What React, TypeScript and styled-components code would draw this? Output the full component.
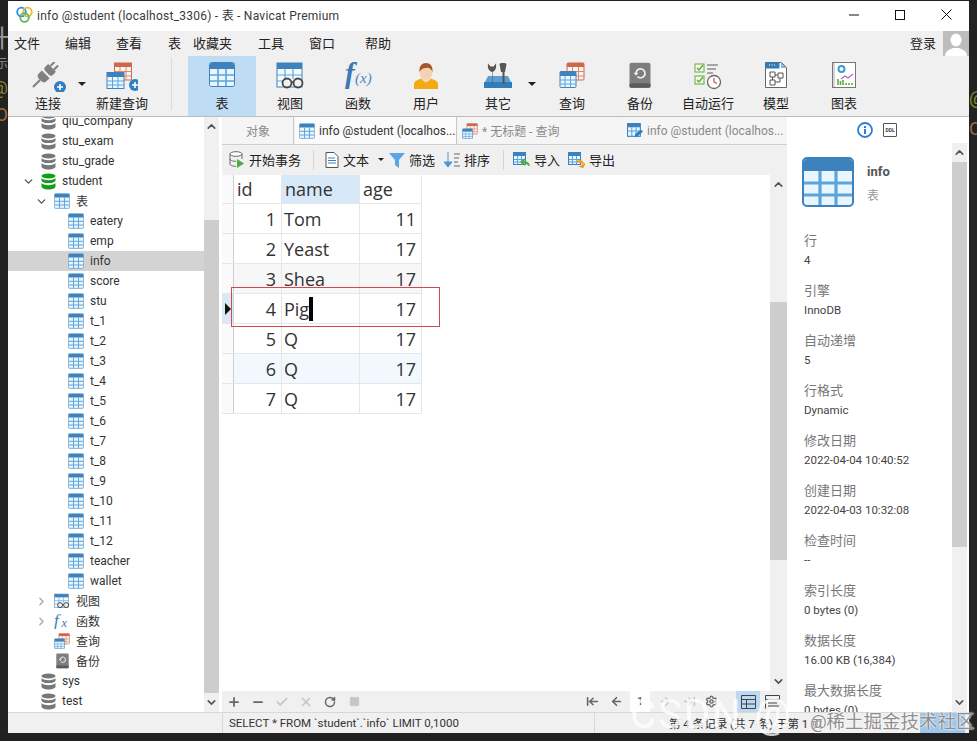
import React from 'react'
import styled, { createGlobalStyle } from 'styled-components'
import {
	ArrowLeft,
	ArrowLeftToLine,
	ArrowRight,
	ArrowRightToLine,
	Check,
	ChevronDown,
	ChevronRight,
	ChevronUp,
	Minus,
	Plus,
	RotateCw,
	Settings,
	Square,
	X,
} from 'lucide-react'

const FONT = `Roboto, "Noto Sans CJK SC", sans-serif`
const GRID_FONT = `"Open Sans", "Noto Sans CJK SC", sans-serif`

const GlobalStyle = createGlobalStyle`
	html, body {
		margin: 0;
		height: 741px;
		overflow: hidden;
		background: #202020;
		font-family: ${FONT};
	}
	* { box-sizing: border-box; }
`

const Desktop = styled.div`
	position: relative;
	display: flex;
	width: 977px;
	height: 741px;
	padding-top: 1px;
	overflow: hidden;
`

const EdgeStrip = styled.div<{ $side: 'left' | 'right' }>`
	width: 8px;
	height: 732px;
	overflow: hidden;
	display: flex;
	flex-direction: column;
	align-items: ${(p) => (p.$side === 'left' ? 'flex-end' : 'flex-start')};
	background: #222;
`

const EdgeGlyph = styled.div<{ $h: number; $size: number; $color: string; $shift?: number }>`
	height: ${(p) => p.$h}px;
	margin-right: ${(p) => p.$shift ?? 0}px;
	display: flex;
	align-items: flex-end;
	font-size: ${(p) => p.$size}px;
	line-height: 1;
	color: ${(p) => p.$color};
	white-space: nowrap;
`

const Win = styled.div`
	width: 961px;
	height: 732px;
	display: flex;
	flex-direction: column;
	background: #f0f0f0;
	overflow: hidden;
`

const TitleBar = styled.div`
	height: 30px;
	flex: none;
	display: flex;
	align-items: center;
	background: #fff;
	padding: 0 0 3px 8px;
`

const TitleText = styled.div`
	margin-left: 4px;
	font-size: 12px;
	letter-spacing: 0.02em;
	color: #3a3a3a;
	white-space: nowrap;
`

const WinButtons = styled.div`
	margin-left: auto;
	display: flex;
	align-items: center;
`

const WinButton = styled.div`
	width: 46px;
	height: 26px;
	display: flex;
	align-items: center;
	justify-content: center;
`

const MenuBar = styled.div`
	height: 25px;
	flex: none;
	display: flex;
	align-items: center;
	padding-left: 6px;
`

const MenuItem = styled.div<{ $w: number }>`
	width: ${(p) => p.$w}px;
	padding-bottom: 2px;
	font-size: 13px;
	color: #222;
	white-space: nowrap;
`

const Login = styled.div`
	margin-left: auto;
	display: flex;
	align-items: center;
	gap: 7px;
	font-size: 13px;
	color: #222;
`

const LoginText = styled.span`
	padding-bottom: 2px;
`

const Avatar = styled.div`
	width: 26px;
	height: 25px;
	background: #bdbdbd;
	overflow: hidden;
`

const ToolBar = styled.div`
	height: 61px;
	flex: none;
	display: flex;
	padding-left: 6px;
	border-bottom: 1px solid #bcbcbc;
`

const ToolItem = styled.div<{ $active?: boolean; $nudge?: number }>`
	width: 68px;
	margin-left: ${(p) => p.$nudge ?? 0}px;
	display: flex;
	flex-direction: column;
	align-items: center;
	padding-top: 6px;
	background: ${(p) => (p.$active ? '#bfdcf5' : 'transparent')};
`

const ToolIcon = styled.div`
	height: 30px;
	display: flex;
	align-items: flex-start;
	justify-content: center;
`

const ToolLabel = styled.div`
	margin-top: 3px;
	font-size: 13px;
	line-height: 18px;
	color: #222;
	white-space: nowrap;
`

const ToolCaret = styled.div`
	width: 8px;
	margin-left: -4px;
	margin-right: 2px;
	margin-top: 26px;
	height: 0;
	border-left: 4px solid transparent;
	border-right: 4px solid transparent;
	border-top: 4px solid #222;
`

const ToolSep = styled.div`
	width: 1px;
	margin: 2px 16px 6px 15px;
	background: #dcdcdc;
`

const Body = styled.div`
	flex: 1;
	min-height: 0;
	display: flex;
	background: #fff;
`

const LeftPane = styled.div`
	width: 214px;
	flex: none;
	display: flex;
	background: #fff;
`

const Tree = styled.div`
	width: 196px;
	overflow: hidden;
`

const TreeScroll = styled.div`
	margin-top: -6px;
`

const TreeRow = styled.div<{ $selected?: boolean; $indent: number }>`
	height: 20px;
	display: flex;
	align-items: center;
	padding-left: ${(p) => p.$indent}px;
	background: ${(p) => (p.$selected ? '#d3d3d3' : 'transparent')};
	font-size: 12px;
	color: #333;
	white-space: nowrap;
`

const Twisty = styled.div`
	width: 19px;
	margin-left: -5px;
	flex: none;
	display: flex;
	justify-content: flex-start;
`

const TreeIconBox = styled.div<{ $w?: number }>`
	width: ${(p) => p.$w ?? 16}px;
	height: 16px;
	flex: none;
	display: flex;
	align-items: center;
	justify-content: center;
`

const TreeLabel = styled.span`
	margin-left: 6px;
	padding-bottom: 1px;
`

const ScrollBar = styled.div<{ $w?: number }>`
	width: ${(p) => p.$w ?? 15}px;
	flex: none;
	display: flex;
	flex-direction: column;
	background: #f0f0f0;
`

const ScrollArrow = styled.div`
	height: 19px;
	flex: none;
	display: flex;
	align-items: center;
	justify-content: center;
	color: #555;
`

const ScrollTrack = styled.div<{ $h?: number; $thumb?: boolean }>`
	${(p) => (p.$h ? `height: ${p.$h}px; flex: none;` : 'flex: 1;')}
	background: ${(p) => (p.$thumb ? '#cdcdcd' : '#f0f0f0')};
`

const Center = styled.div`
	width: 565px;
	flex: none;
	display: flex;
	flex-direction: column;
	background: #f0f0f0;
`

const TabStrip = styled.div`
	height: 28px;
	flex: none;
	display: flex;
	align-items: stretch;
	padding-left: 1px;
	background: #f2f2f2;
	border-bottom: 1px solid #cfcfcf;
`

const Tab = styled.div<{ $w: number; $kind?: 'plain' | 'active' | 'idle' }>`
	width: ${(p) => p.$w}px;
	flex: none;
	display: flex;
	align-items: center;
	justify-content: ${(p) => (p.$kind === 'plain' ? 'center' : 'flex-start')};
	gap: 4px;
	padding-left: ${(p) => (p.$kind === 'plain' ? 0 : 4)}px;
	margin-right: 1px;
	font-size: 12px;
	color: ${(p) => (p.$kind === 'active' ? '#333' : '#8a8a8a')};
	background: ${(p) => (p.$kind === 'active' ? '#fbfbfb' : '#f5f5f5')};
	border-right: 1px solid ${(p) => (p.$kind === 'idle' ? '#f5f5f5' : '#c8c8c8')};
	white-space: nowrap;
	overflow: hidden;

	svg {
		flex: none;
	}
`

const DataBar = styled.div`
	height: 30px;
	flex: none;
	display: flex;
	align-items: center;
	padding: 0 0 1px 7px;
`

const DataButton = styled.div<{ $w: number }>`
	width: ${(p) => p.$w}px;
	flex: none;
	display: flex;
	align-items: center;
	gap: 4px;
	font-size: 13px;
	color: #222;
	white-space: nowrap;
`

const DataSep = styled.div<{ $gap: number }>`
	width: 1px;
	height: 20px;
	margin-right: ${(p) => p.$gap}px;
	background: #d6d6d6;
`

const SmallCaret = styled.div`
	margin-left: 5px;
	border-left: 3px solid transparent;
	border-right: 3px solid transparent;
	border-top: 3px solid #222;
`

const GridRegion = styled.div`
	position: relative;
	flex: 1;
	min-height: 0;
	display: flex;
`

const GridPane = styled.div`
	flex: 1;
	background: #fff;
	font-family: ${GRID_FONT};
`

const GridRow = styled.div<{ $h: number; $tint?: string }>`
	display: grid;
	grid-template-columns: 12px 48px 78px 62px;
	width: 200px;
	height: ${(p) => p.$h}px;
	background: ${(p) => p.$tint ?? '#fff'};
	border-bottom: 1px solid #e6e6e6;
	font-size: 18px;
	color: #333;
`

const RowHead = styled.div<{ $current?: boolean }>`
	display: flex;
	align-items: center;
	background: ${(p) => (p.$current ? '#dbe9f6' : '#fafafa')};
	border-right: 1px solid #cfcfcf;
`

const RowMarker = styled.div`
	margin-left: 3px;
	border-top: 6px solid transparent;
	border-bottom: 6px solid transparent;
	border-left: 6px solid #111;
`

const Cell = styled.div<{ $right?: boolean; $head?: boolean; $on?: boolean }>`
	display: flex;
	align-items: center;
	justify-content: ${(p) => (p.$right ? 'flex-end' : 'flex-start')};
	padding: 0 ${(p) => (p.$right ? 5 : 2)}px 0 ${(p) => (p.$head ? 3 : 2)}px;
	background: ${(p) => (p.$on ? '#d7e8f8' : 'transparent')};
	border-right: 1px solid #e6e6e6;
	white-space: nowrap;
`

const TextCaret = styled.span`
	display: inline-block;
	width: 4px;
	height: 24px;
	background: #000;
`

const RedBox = styled.div`
	position: absolute;
	left: 9px;
	top: 112px;
	width: 209px;
	height: 40px;
	border: 1px solid #d0494f;
	pointer-events: none;
`

const PagerBar = styled.div`
	height: 21px;
	flex: none;
	display: flex;
	align-items: center;
	color: #666;
`

const PagerBtn = styled.div<{ $faded?: boolean; $w?: number; $on?: boolean }>`
	width: ${(p) => p.$w ?? 24}px;
	height: 21px;
	flex: none;
	display: flex;
	align-items: center;
	justify-content: center;
	color: ${(p) => (p.$faded ? '#c6c6c6' : '#666')};
	background: ${(p) => (p.$on ? '#bcd8f2' : 'transparent')};
`

const PageBox = styled.div`
	width: 20px;
	height: 21px;
	margin: 0 3px 0 2px;
	flex: none;
	display: flex;
	align-items: center;
	justify-content: center;
	background: #fff;
	font-size: 11px;
	color: #444;
`

const Spacer = styled.div`
	flex: 1;
`

const InfoWrap = styled.div`
	flex: 1;
	min-width: 0;
	display: flex;
	flex-direction: column;
	background: #fff;
`

const InfoTabs = styled.div`
	height: 26px;
	flex: none;
	display: flex;
	align-items: center;
	padding: 0 0 0 70px;
	gap: 10px;
`

const InfoBody = styled.div`
	flex: 1;
	min-height: 0;
	display: flex;
`

const InfoPane = styled.div`
	width: 165px;
	flex: none;
	padding: 14px 0 0 15px;
	overflow: hidden;
`

const InfoHead = styled.div`
	display: flex;
	gap: 13px;
	margin-bottom: 23px;
`

const InfoTitle = styled.div`
	padding-top: 6px;
	font-size: 13px;
	line-height: 18px;
	font-weight: 700;
	color: #555;
`

const InfoKind = styled.div`
	margin-top: 7px;
	font-size: 12px;
	line-height: 16px;
	color: #999;
`

const Prop = styled.div`
	height: 50px;
	padding: 1px 0 0 2px;
`

const PropName = styled.div`
	font-size: 13px;
	line-height: 20px;
	color: #777;
	white-space: nowrap;
`

const PropValue = styled.div`
	font-size: 11.5px;
	line-height: 19px;
	color: #444;
	white-space: nowrap;
`

const StatusBar = styled.div`
	height: 21px;
	flex: none;
	display: flex;
	align-items: center;
	background: #f0f0f0;
	border-top: 1px solid #d8d8d8;
	font-size: 11.5px;
	color: #333;
`

const StatusCell = styled.div<{ $w?: number; $pad?: number; $bare?: boolean }>`
	width: ${(p) => (p.$w ? `${p.$w}px` : 'auto')};
	height: 100%;
	flex: ${(p) => (p.$w ? 'none' : 1)};
	display: flex;
	align-items: center;
	padding-left: ${(p) => p.$pad ?? 6}px;
	border-left: ${(p) => (p.$bare ? 'none' : '1px solid #d8d8d8')};
	white-space: nowrap;
`

const StatusBlue = styled.div`
	width: 45px;
	height: 100%;
	flex: none;
	margin-right: 4px;
	background: #9cc6ec;
`

const WatermarkLatin = styled.div`
	position: absolute;
	left: 630px;
	top: 693px;
	font-size: 40px;
	line-height: 44px;
	letter-spacing: 2px;
	color: rgba(255, 255, 255, 0.8);
	white-space: nowrap;
	pointer-events: none;
`

const WatermarkCjk = styled.div`
	position: absolute;
	left: 810px;
	top: 712px;
	font-size: 18.5px;
	line-height: 20px;
	color: #8f8f8f;
	text-shadow: 0 0 2px #fff, 0 0 2px #fff;
	white-space: nowrap;
	pointer-events: none;
`

// icons ---------------------------------------------------------------

const TableIcon = ({ size = 16, height, body = '#eaf6ff' }: { size?: number; height?: number; body?: string }) => (
	<svg width={size} height={height ?? size} viewBox="0 0 26 25">
		<rect x="0.5" y="0.5" width="25" height="24" rx="2" fill={body} stroke="#3d82bd" />
		<path d="M1 6V2.5Q1 1 2.5 1h21Q25 1 25 2.5V7H1z" fill="#3d82bd" />
		<path d="M9 7v17M17 7v17M1 13h24M1 19h24" stroke="#5ba4dc" strokeWidth="1.6" fill="none" />
	</svg>
)

const DbIcon = ({ color = '#777' }: { color?: string }) => (
	<svg width="15" height="17" viewBox="0 0 15 17">
		<ellipse cx="7.5" cy="3" rx="7" ry="2.6" fill={color} />
		<path d="M.5 5v2.4c0 1.4 3 2.6 7 2.6s7-1.2 7-2.6V5c-1 1.4-3.6 2.2-7 2.2S1.500 6.400.5 5z" fill={color} />
		<path d="M.5 10v3.400C.5 15 3.500 16.400 7.500 16.400s7-1.400 7-3V10c-1 1.400-3.600 2.200-7 2.200S1.500 11.400.5 10z" fill={color} />
	</svg>
)

const ViewIcon = ({ size = 29 }: { size?: number }) => (
	<svg width={size} height={size} viewBox="0 0 29 29">
		<rect x="1" y="1" width="25" height="24" fill="#f7fbff" stroke="#3d82bd" />
		<rect x="1" y="1" width="25" height="6" fill="#3d82bd" />
		<path d="M9 7v17M17 7v10M1 13h25M1 19h6" stroke="#5ba4dc" strokeWidth="1.2" />
		<circle cx="11" cy="21" r="4.500" fill="#f0f0f0" stroke="#444" strokeWidth="1.800" />
		<circle cx="22" cy="21" r="4.500" fill="#f0f0f0" stroke="#444" strokeWidth="1.800" />
		<path d="M15 20h3" stroke="#444" strokeWidth="1.500" />
	</svg>
)

const FxIcon = () => (
	<svg width="28" height="28" viewBox="0 0 28 28">
		<text x="1" y="21" fontFamily='"Liberation Serif", serif' fontStyle="italic" fontWeight="700" fontSize="29" fill="#3b78b5">f</text>
		<text x="11" y="21" fontFamily='"Liberation Serif", serif' fontStyle="italic" fontSize="15" fill="#4a86c0">(x)</text>
	</svg>
)

const TreeFxIcon = () => (
	<svg width="17" height="16" viewBox="0 0 17 16">
		<text x="0" y="13" fontFamily='"Liberation Serif", serif' fontStyle="italic" fontSize="18" fill="#3b78b5">f</text>
		<text x="8" y="14" fontFamily='"Liberation Serif", serif' fontStyle="italic" fontSize="13" fill="#3b78b5">x</text>
	</svg>
)

const QueryIcon = ({ size = 26 }: { size?: number }) => (
	<svg width={size} height={size} viewBox="0 0 26 26">
		<rect x="8" y="1" width="17" height="17" rx="1" fill="#fdf3ee" stroke="#d0674a" />
		<rect x="8" y="1" width="17" height="4" fill="#d0674a" />
		<path d="M13.500 5v13M19.500 5v13M8 9.500h17M8 14h17" stroke="#d98a70" />
		<rect x="1" y="9.500" width="16" height="16" rx="1" fill="#eaf6ff" stroke="#3d82bd" />
		<rect x="1" y="9.500" width="16" height="4.500" fill="#3d82bd" />
		<path d="M6 14v11.500M11.500 14v11.500M1 18h16M1 22h16" stroke="#5ba4dc" />
	</svg>
)

const BadgePlus = () => (
	<g>
		<circle cx="29" cy="23" r="6" fill="#2f80c2" />
		<path d="M26 23h6M29 20v6" stroke="#fff" strokeWidth="1.600" />
	</g>
)

const BackupIcon = ({ size = 22 }: { size?: number }) => (
	<svg width={size} height={size * 1.2} viewBox="0 0 22 26">
		<rect x="0.500" y="0.500" width="21" height="25" rx="2" fill="#7e7e7e" />
		<rect x="0.500" y="21" width="21" height="4.500" rx="1.500" fill="#5c5c5c" />
		<path d="M7 11a4.500 4.500 0 1 1 1.500 3.500" fill="none" stroke="#eee" strokeWidth="1.700" />
		<path d="M4.500 10.500h5L7 13.500z" fill="#eee" />
	</svg>
)

const BigIcons: Record<string, React.ReactNode> = {
	plug: (
		<svg width="36" height="30" viewBox="0 0 36 30">
			<g transform="rotate(45 15 13)" fill="#808080">
				<rect x="11.500" y="-3" width="2" height="6" />
				<rect x="16.500" y="-3" width="2" height="6" />
				<path d="M9.500 3h11v4q0 3-3 3h-5q-3 0-3-3z" />
				<path d="M9.500 12h11v4q0 4-4 4h-3q-4 0-4-4z" />
				<rect x="14" y="20" width="2" height="10" />
			</g>
			<g transform="translate(1 2)"><BadgePlus /></g>
		</svg>
	),
	newQuery: (
		<svg width="32" height="30" viewBox="0 0 32 30">
			<rect x="8.500" y="1" width="17" height="17" fill="#fdf3ee" stroke="#d0674a" />
			<rect x="8.500" y="1" width="17" height="4" fill="#d0674a" />
			<path d="M14 5v13M20 5v13M8.500 9.500h17M8.500 14h17" stroke="#d98a70" />
			<rect x="1" y="10.500" width="17" height="16" fill="#eaf6ff" stroke="#3d82bd" />
			<rect x="1" y="10.500" width="17" height="4.500" fill="#3d82bd" />
			<path d="M6.500 15v11.500M12 15v11.500M1 19h17M1 23h17" stroke="#5ba4dc" />
			<BadgePlus />
		</svg>
	),
	user: (
		<svg width="26" height="28" viewBox="0 0 26 28">
			<path d="M1 27v-5c0-3 4-4.500 8-5.500h8c4 1 8 2.500 8 5.500v5z" fill="#f2ab12" />
			<path d="M9 15h8v3l-4 2.500L9 18z" fill="#f7dcc6" />
			<ellipse cx="13" cy="10" rx="6.500" ry="8" fill="#f6d2b4" />
			<path d="M6.500 10C6 4 9 1 13 1s7 3 6.500 9C18 6 15.500 5.500 13 6c-3 .2-5 1-6.500 4z" fill="#a5552a" />
		</svg>
	),
	tools: (
		<svg width="28" height="27" viewBox="0 0 28 27">
			<path d="M4 14h20l4 8v4H0v-4z" fill="#5b9fd6" />
			<path d="M0 20h28v6H0z" fill="#2f7dbb" />
			<path d="M8 22V10C4.500 9 3.500 5.500 4 1.500l2.500 3h3l2.500-3c.5 4-.5 7.500-3.500 8.500V22z" fill="#555" />
			<path d="M18.500 22V10h-1.500L15.500 2l1.500-1h4l1.500 1L21 10h-.5V22z" fill="#555" />
		</svg>
	),
	auto: (
		<svg width="28" height="28" viewBox="0 0 28 28">
			<rect x="1" y="2" width="9" height="8" fill="#f3fae9" stroke="#67a845" />
			<path d="M3 6l2 2 4-5" fill="none" stroke="#67a845" strokeWidth="1.500" />
			<rect x="1" y="14" width="9" height="8" fill="#f3fae9" stroke="#67a845" />
			<path d="M3 18l2 2 4-5" fill="none" stroke="#67a845" strokeWidth="1.500" />
			<path d="M13 3h11M13 7h9M13 11h6" stroke="#8c8c8c" strokeWidth="1.500" />
			<circle cx="20" cy="20" r="6.500" fill="#fff" stroke="#666" strokeWidth="1.300" />
			<path d="M20 16v4l3 1.500" fill="none" stroke="#c9453e" strokeWidth="1.200" />
		</svg>
	),
	model: (
		<svg width="22" height="26" viewBox="0 0 22 26">
			<path d="M.5.500h16l5 5v20H.5z" fill="#fff" stroke="#666" />
			<path d="M.5.500h14v6H.5z" fill="#2f7dbb" />
			<path d="M16 .5l5.500 5.500H16z" fill="#7db6e3" />
			<path d="M4 3h1M6.500 3h1M9 3h1" stroke="#fff" />
			<path d="M5 10h5v5H5zM13 11h5v5h-5zM5 18h5v5H5zM10 13h3M7.500 15v3M15 16v4h-5" fill="none" stroke="#555" />
		</svg>
	),
	chart: (
		<svg width="24" height="26" viewBox="0 0 24 26">
			<rect x="0.500" y="0.500" width="23" height="25" fill="#fff" stroke="#777" />
			<path d="M2 1v24" stroke="#aaa" />
			<circle cx="9.500" cy="7" r="3" fill="none" stroke="#3d9bd4" strokeWidth="2" />
			<path d="M9 17l4-3 3 2 5-4" fill="none" stroke="#b06ac0" strokeWidth="1.200" />
			<path d="M6 23v-6M8.500 23v-4M11 23v-5M14 23v-2M17 23v-2M20 23v-2" stroke="#5cae3f" strokeWidth="1.600" />
		</svg>
	),
}

const toolbarItems = [
	{ label: '表', icon: <TableIcon size={26} height={25} />, active: true },
	{ label: '视图', icon: <ViewIcon /> },
	{ label: '函数', icon: <FxIcon /> },
	{ label: '用户', icon: BigIcons.user },
]

const toolbarTail = [
	{ label: '查询', icon: <QueryIcon /> },
	{ label: '备份', icon: <BackupIcon /> },
	{ label: '自动运行', icon: BigIcons.auto },
	{ label: '模型', icon: BigIcons.model },
	{ label: '图表', icon: BigIcons.chart },
]

const tableNames = ['eatery', 'emp', 'info', 'score', 'stu', 't_1', 't_2', 't_3', 't_4', 't_5', 't_6', 't_7', 't_8', 't_9', 't_10', 't_11', 't_12', 'teacher', 'wallet']

const gridRows = [
	{ id: 1, name: 'Tom', age: 11 },
	{ id: 2, name: 'Yeast', age: 17 },
	{ id: 3, name: 'Shea', age: 17, tint: '#f7f7f7' },
	{ id: 4, name: 'Pig', age: 17, current: true },
	{ id: 5, name: 'Q', age: 17 },
	{ id: 6, name: 'Q', age: 17, tint: '#f2f8fd' },
	{ id: 7, name: 'Q', age: 17 },
]

const props = [
	['行', '4'],
	['引擎', 'InnoDB'],
	['自动递增', '5'],
	['行格式', 'Dynamic'],
	['修改日期', '2022-04-04 10:40:52'],
	['创建日期', '2022-04-03 10:32:08'],
	['检查时间', '--'],
	['索引长度', '0 bytes (0)'],
	['数据长度', '16.00 KB (16,384)'],
	['最大数据长度', '0 bytes (0)'],
]

const Logo = () => (
	<svg width="17" height="17" viewBox="0 0 17 17">
		<circle cx="5.500" cy="6" r="4.300" fill="none" stroke="#2d8fe0" strokeWidth="1.800" />
		<circle cx="11.500" cy="6" r="4.300" fill="none" stroke="#f2b632" strokeWidth="1.800" />
		<circle cx="8.500" cy="11.500" r="4.300" fill="none" stroke="#5cb85c" strokeWidth="1.800" />
	</svg>
)

const Arrow = ({ up }: { up?: boolean }) => (up ? <ChevronUp size={13} strokeWidth={3} /> : <ChevronDown size={13} strokeWidth={3} />)

const MiniDoc = () => (
	<svg width="14" height="16" viewBox="0 0 14 16">
		<path d="M1 .5h8l4 4v11H1z" fill="#fff" stroke="#555" />
		<path d="M3 6h7M3 8.500h8M3 11h8" stroke="#3d82bd" />
	</svg>
)

const TxIcon = () => (
	<svg width="16" height="17" viewBox="0 0 16 17">
		<ellipse cx="7" cy="3" rx="6" ry="2.300" fill="#fff" stroke="#666" />
		<path d="M1 3v10c0 1.300 2.500 2.300 6 2.300M13 3v5M1 8c0 1.300 2.500 2.300 6 2.300" fill="none" stroke="#666" />
		<path d="M8 8l7 4.500L8 17z" fill="#4cae3c" />
	</svg>
)

const FilterIcon = () => (
	<svg width="16" height="16" viewBox="0 0 16 16">
		<path d="M0 1h16L10 8v8l-4-3V8z" fill="#58a6e6" />
	</svg>
)

const SortIcon = () => (
	<svg width="16" height="16" viewBox="0 0 16 16">
		<path d="M4 0v12M0 10l4 5 4-5z" fill="#4c98d8" stroke="#4c98d8" />
		<path d="M10 2h6M10 6h5M10 10h4M10 14h6" stroke="#666" />
	</svg>
)

const ImportIcon = ({ out }: { out?: boolean }) => (
	<svg width="17" height="16" viewBox="0 0 17 16">
		<rect x="0.500" y="0.500" width="12" height="12" fill="#eaf6ff" stroke="#3d82bd" />
		<rect x="0.500" y="0.500" width="12" height="3.500" fill="#3d82bd" />
		<path d="M4.500 4v8.500M8.500 4v8.500M1 7.500h11M1 10h11" stroke="#5ba4dc" />
		<path d={out ? 'M8 9h4c2 0 3 1 3 3M12 14.500l3 1 1.500-3.500z' : 'M16 14c0-3-1.500-4-5-4M11 7.500L8 10l3 2.500z'} fill={out ? '#f0a020' : '#4cae3c'} stroke={out ? '#f0a020' : '#4cae3c'} strokeWidth="1.300" />
	</svg>
)

const EditTableIcon = () => (
	<svg width="16" height="16" viewBox="0 0 15 15">
		<rect x="0.500" y="0.500" width="12" height="12" fill="#eaf6ff" stroke="#3d82bd" />
		<rect x="0.500" y="0.500" width="12" height="3.500" fill="#3d82bd" />
		<path d="M4.500 4v8.500M8.500 4v8.500M1 7.500h11" stroke="#5ba4dc" />
		<path d="M7 13l1-3 5-4 2 2-5 4.500z" fill="#2f80c2" />
	</svg>
)

const InfoIcon = () => (
	<svg width="16" height="16" viewBox="0 0 16 16">
		<circle cx="8" cy="8" r="7" fill="#fff" stroke="#2d7ddb" strokeWidth="1.800" />
		<rect x="7" y="7" width="2" height="5" fill="#2d7ddb" />
		<rect x="7" y="4" width="2" height="2" fill="#2d7ddb" />
	</svg>
)

const DdlBox = styled.div`
	width: 14px;
	height: 14px;
	display: flex;
	align-items: center;
	justify-content: center;
	border: 1px solid #555;
	border-radius: 1px;
	font-size: 5px;
	font-weight: 700;
	color: #444;
`

const AvatarIcon = () => (
	<svg width="26" height="25" viewBox="0 0 26 25">
		<ellipse cx="13" cy="9" rx="5.500" ry="6.500" fill="#fff" />
		<path d="M2 25c0-5 5-7 8-8h6c3 1 8 3 8 8z" fill="#fff" />
	</svg>
)

const App = () => (
	<>
		<GlobalStyle />
		<Desktop>
			<EdgeStrip $side="left">
				<EdgeGlyph $h={50} $size={24} $color="#999" $shift={-6}>十</EdgeGlyph>
				<EdgeGlyph $h={19} $size={12} $color="#888">示</EdgeGlyph>
				<EdgeGlyph $h={27} $size={18} $color="#8a8a30">@</EdgeGlyph>
				<EdgeGlyph $h={27} $size={18} $color="#a8683a">O</EdgeGlyph>
			</EdgeStrip>
			<Win>
				<TitleBar>
					<Logo />
					<TitleText>info @student (localhost_3306) - 表 - Navicat Premium</TitleText>
					<WinButtons>
						<WinButton>
							<svg width="10" height="10" viewBox="0 0 10 10"><path d="M0 5h10" stroke="#111" /></svg>
						</WinButton>
						<WinButton>
							<svg width="10" height="10" viewBox="0 0 10 10"><rect x=".5" y=".5" width="9" height="9" fill="none" stroke="#111" /></svg>
						</WinButton>
						<WinButton>
							<svg width="11" height="11" viewBox="0 0 11 11"><path d="M.5.5l10 10M10.500.5l-10 10" stroke="#111" /></svg>
						</WinButton>
					</WinButtons>
				</TitleBar>
				<MenuBar>
					<MenuItem $w={51}>文件</MenuItem>
					<MenuItem $w={51}>编辑</MenuItem>
					<MenuItem $w={52}>查看</MenuItem>
					<MenuItem $w={25}>表</MenuItem>
					<MenuItem $w={65}>收藏夹</MenuItem>
					<MenuItem $w={51}>工具</MenuItem>
					<MenuItem $w={56}>窗口</MenuItem>
					<MenuItem $w={40}>帮助</MenuItem>
					<Login>
						<LoginText>登录</LoginText>
						<Avatar><AvatarIcon /></Avatar>
					</Login>
				</MenuBar>
				<ToolBar>
					<ToolItem>
						<ToolIcon>{BigIcons.plug}</ToolIcon>
						<ToolLabel>连接</ToolLabel>
					</ToolItem>
					<ToolCaret />
					<ToolItem>
						<ToolIcon>{BigIcons.newQuery}</ToolIcon>
						<ToolLabel>新建查询</ToolLabel>
					</ToolItem>
					<ToolSep />
					{toolbarItems.map((t) => (
						<ToolItem key={t.label} $active={t.active}>
							<ToolIcon>{t.icon}</ToolIcon>
							<ToolLabel>{t.label}</ToolLabel>
						</ToolItem>
					))}
					<ToolItem $nudge={4}>
						<ToolIcon>{BigIcons.tools}</ToolIcon>
						<ToolLabel>其它</ToolLabel>
					</ToolItem>
					<ToolCaret />
					{toolbarTail.map((t) => (
						<ToolItem key={t.label}>
							<ToolIcon>{t.icon}</ToolIcon>
							<ToolLabel>{t.label}</ToolLabel>
						</ToolItem>
					))}
				</ToolBar>
				<Body>
					<LeftPane>
						<Tree>
							<TreeScroll>
								{['qiu_company', 'stu_exam', 'stu_grade'].map((n) => (
									<TreeRow key={n} $indent={33}>
										<TreeIconBox $w={15}><DbIcon /></TreeIconBox>
										<TreeLabel>{n}</TreeLabel>
									</TreeRow>
								))}
								<TreeRow $indent={19}>
									<Twisty><ChevronDown size={13} strokeWidth={2.500} color="#555" /></Twisty>
									<TreeIconBox $w={15}><DbIcon color="#12a01c" /></TreeIconBox>
									<TreeLabel>student</TreeLabel>
								</TreeRow>
								<TreeRow $indent={32}>
									<Twisty><ChevronDown size={13} strokeWidth={2.500} color="#555" /></Twisty>
									<TreeIconBox><TableIcon /></TreeIconBox>
									<TreeLabel>表</TreeLabel>
								</TreeRow>
								{tableNames.map((n) => (
									<TreeRow key={n} $indent={60} $selected={n === 'info'}>
										<TreeIconBox><TableIcon /></TreeIconBox>
										<TreeLabel>{n}</TreeLabel>
									</TreeRow>
								))}
								<TreeRow $indent={32}>
									<Twisty><ChevronRight size={13} strokeWidth={2.500} color="#aaa" /></Twisty>
									<TreeIconBox><ViewIcon size={17} /></TreeIconBox>
									<TreeLabel>视图</TreeLabel>
								</TreeRow>
								<TreeRow $indent={32}>
									<Twisty><ChevronRight size={13} strokeWidth={2.500} color="#aaa" /></Twisty>
									<TreeIconBox><TreeFxIcon /></TreeIconBox>
									<TreeLabel>函数</TreeLabel>
								</TreeRow>
								<TreeRow $indent={46}>
									<TreeIconBox><QueryIcon size={16} /></TreeIconBox>
									<TreeLabel>查询</TreeLabel>
								</TreeRow>
								<TreeRow $indent={46}>
									<TreeIconBox><BackupIcon size={13} /></TreeIconBox>
									<TreeLabel>备份</TreeLabel>
								</TreeRow>
								{['sys', 'test'].map((n) => (
									<TreeRow key={n} $indent={33}>
										<TreeIconBox $w={15}><DbIcon /></TreeIconBox>
										<TreeLabel>{n}</TreeLabel>
									</TreeRow>
								))}
							</TreeScroll>
						</Tree>
						<ScrollBar>
							<ScrollArrow><Arrow up /></ScrollArrow>
							<ScrollTrack $h={84} />
							<ScrollTrack $thumb $h={473} />
							<ScrollArrow><Arrow /></ScrollArrow>
						</ScrollBar>
					</LeftPane>
					<Center>
						<TabStrip>
							<Tab $w={71} $kind="plain">对象</Tab>
							<Tab $w={162} $kind="active"><TableIcon size={16} />info @student (localhos...</Tab>
							<Tab $w={164} $kind="idle"><QueryIcon size={16} />* 无标题 - 查询</Tab>
							<Tab $w={164} $kind="idle"><EditTableIcon />info @student (localhos...</Tab>
						</TabStrip>
						<DataBar>
							<DataButton $w={84}><TxIcon />开始事务</DataButton>
							<DataSep $gap={11} />
							<DataButton $w={64}><MiniDoc />文本<SmallCaret /></DataButton>
							<DataButton $w={55}><FilterIcon />筛选</DataButton>
							<DataButton $w={59}><SortIcon />排序</DataButton>
							<DataSep $gap={9} />
							<DataButton $w={55}><ImportIcon />导入</DataButton>
							<DataButton $w={55}><ImportIcon out />导出</DataButton>
						</DataBar>
						<GridRegion>
							<GridPane>
								<GridRow $h={29}>
									<RowHead />
									<Cell $head>id</Cell>
									<Cell $head $on>name</Cell>
									<Cell $head>age</Cell>
								</GridRow>
								{gridRows.map((r) => (
									<GridRow key={r.id} $h={30} $tint={r.tint}>
										<RowHead $current={r.current}>{r.current && <RowMarker />}</RowHead>
										<Cell $right>{r.id}</Cell>
										<Cell>{r.name}{r.current && <TextCaret />}</Cell>
										<Cell $right>{r.age}</Cell>
									</GridRow>
								))}
							</GridPane>
							<ScrollBar $w={17}>
								<ScrollArrow><Arrow up /></ScrollArrow>
								<ScrollTrack $h={108} />
								<ScrollTrack $thumb $h={258} />
								<ScrollTrack />
								<ScrollArrow><Arrow /></ScrollArrow>
							</ScrollBar>
							<RedBox />
						</GridRegion>
						<PagerBar>
							<PagerBtn><Plus size={14} strokeWidth={3} /></PagerBtn>
							<PagerBtn><Minus size={14} strokeWidth={3} /></PagerBtn>
							<PagerBtn $faded><Check size={14} strokeWidth={3} /></PagerBtn>
							<PagerBtn $faded><X size={14} strokeWidth={3} /></PagerBtn>
							<PagerBtn><RotateCw size={12} strokeWidth={3} /></PagerBtn>
							<PagerBtn $faded><Square size={11} fill="#c6c6c6" /></PagerBtn>
							<Spacer />
							<PagerBtn><ArrowLeftToLine size={13} strokeWidth={3} /></PagerBtn>
							<PagerBtn><ArrowLeft size={13} strokeWidth={3} /></PagerBtn>
							<PageBox>1</PageBox>
							<PagerBtn $faded><ArrowRight size={13} strokeWidth={3} /></PagerBtn>
							<PagerBtn $faded><ArrowRightToLine size={13} strokeWidth={3} /></PagerBtn>
							<PagerBtn $w={20}><Settings size={13} strokeWidth={2.500} /></PagerBtn>
							<PagerBtn $w={15} />
							<PagerBtn $on>
								<svg width="15" height="14" viewBox="0 0 15 14"><path d="M.5.500h14v13H.5zM.5 4.500h14M5.500 4.500v9M.5 9h14" fill="none" stroke="#444" /></svg>
							</PagerBtn>
							<PagerBtn>
								<svg width="15" height="14" viewBox="0 0 15 14"><path d="M.5.500h14v4H.5zM3 8h9M3 11h11M.5 4.500v9" fill="none" stroke="#444" /></svg>
							</PagerBtn>
							<PagerBtn $w={3} />
						</PagerBar>
					</Center>
					<InfoWrap>
						<InfoTabs>
							<InfoIcon />
							<DdlBox>DDL</DdlBox>
						</InfoTabs>
						<InfoBody>
							<InfoPane>
								<InfoHead>
									<TableIcon size={52} height={50} />
									<div>
										<InfoTitle>info</InfoTitle>
										<InfoKind>表</InfoKind>
									</div>
								</InfoHead>
								{props.map(([name, value]) => (
									<Prop key={name}>
										<PropName>{name}</PropName>
										<PropValue>{value}</PropValue>
									</Prop>
								))}
							</InfoPane>
							<ScrollBar>
								<ScrollArrow><Arrow up /></ScrollArrow>
								<ScrollTrack $thumb $h={385} />
								<ScrollTrack />
								<ScrollArrow><Arrow /></ScrollArrow>
							</ScrollBar>
						</InfoBody>
					</InfoWrap>
				</Body>
				<StatusBar>
					<StatusCell $w={214} $bare />
					<StatusCell $w={372}>SELECT * FROM `student`.`info` LIMIT 0,1000</StatusCell>
					<StatusCell $pad={74}>第 4 条记录 (共 7 条) 于第 1 页</StatusCell>
					<StatusBlue />
				</StatusBar>
			</Win>
			<EdgeStrip $side="right">
				<EdgeGlyph $h={106} $size={18} $color="#8a8a30">@</EdgeGlyph>
				<EdgeGlyph $h={31} $size={18} $color="#a8683a">O</EdgeGlyph>
			</EdgeStrip>
			<WatermarkLatin>CSDN @</WatermarkLatin>
			<WatermarkCjk>@稀土掘金技术社区</WatermarkCjk>
		</Desktop>
	</>
)

export default App
